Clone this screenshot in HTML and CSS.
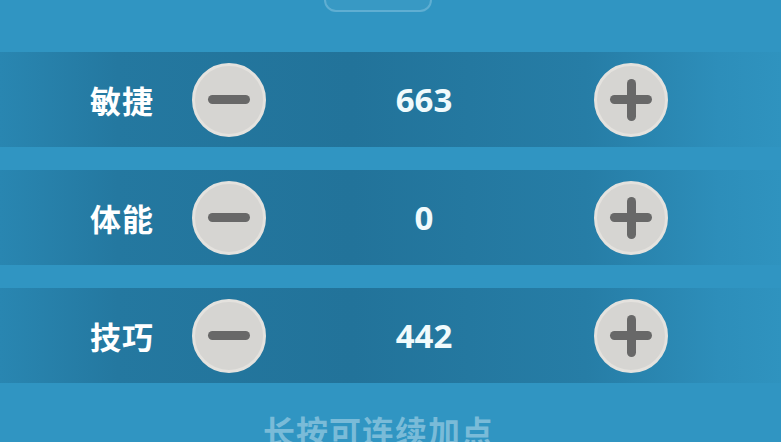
FILE: index.html
```html
<!DOCTYPE html>
<html lang="zh">
  <head>
    <meta charset="UTF-8" />
    <meta name="viewport" content="width=device-width, initial-scale=1.0" />
    <title>加点</title>
    <link rel="stylesheet" href="styles.css">
  </head>
  <body>
    <div class="panel">
      <div class="top-tab"></div>

      <div class="stat-list">
        <div class="stat-row">
          <span class="stat-name">敏捷</span>
          <button type="button" class="round-btn minus"></button>
          <span class="stat-value">663</span>
          <button type="button" class="round-btn plus"></button>
        </div>
        <div class="stat-row">
          <span class="stat-name">体能</span>
          <button type="button" class="round-btn minus"></button>
          <span class="stat-value">0</span>
          <button type="button" class="round-btn plus"></button>
        </div>
        <div class="stat-row">
          <span class="stat-name">技巧</span>
          <button type="button" class="round-btn minus"></button>
          <span class="stat-value">442</span>
          <button type="button" class="round-btn plus"></button>
        </div>
      </div>

      <div class="hint">长按可连续加点</div>
    </div>
  </body>
</html>
```

FILE: styles.css
```css
body {
  margin: 0;
  font-family: "Noto Sans", "Noto Sans CJK SC", sans-serif;
  background-color: rgb(48, 149, 194);
  color: white;
  overflow: hidden;
}

.panel {
  width: 781px;
  height: 442px;
  position: relative;
  display: flex;
  flex-direction: column;
}

/* tab peeking in from the top edge */
.top-tab {
  position: absolute;
  left: 324px;
  top: -30px;
  width: 108px;
  height: 42px;
  border-radius: 12px;
  background-color: rgba(255, 255, 255, 0.04);
  border: 2px solid rgba(170, 215, 235, 0.35);
  box-sizing: border-box;
}

.stat-list {
  display: flex;
  flex-direction: column;
  gap: 23px;
  padding-top: 52px;
}

.stat-row {
  height: 95px;
  display: grid;
  grid-template-columns: 102px 74px 316px 12px 74px;
  align-items: center;
  padding-left: 90px;
  background: linear-gradient(
    to right,
    rgb(41, 134, 177) 0%,
    rgb(36, 120, 160) 15%,
    rgb(34, 115, 154) 45%,
    rgb(38, 125, 166) 75%,
    rgb(45, 142, 186) 92%,
    rgb(47, 147, 191) 100%
  );
}

.stat-name {
  font-size: 31px;
  font-weight: bold;
  letter-spacing: 1px;
}

.stat-value {
  text-align: center;
  font-size: 33px;
  font-weight: bold;
  color: rgb(240, 250, 252);
}

.round-btn {
  width: 74px;
  height: 74px;
  border-radius: 50%;
  border: 3px solid rgb(228, 226, 222);
  background-color: rgb(214, 213, 210);
  padding: 0;
  position: relative;
  cursor: pointer;
}

.round-btn.plus {
  grid-column: 5;
}

.round-btn::before,
.plus::after {
  content: "";
  position: absolute;
  left: 50%;
  top: 50%;
  width: 42px;
  height: 9px;
  margin-left: -21px;
  margin-top: -4.5px;
  border-radius: 5px;
  background-color: rgb(104, 104, 104);
}

.plus::after {
  width: 9px;
  height: 42px;
  margin-left: -4.5px;
  margin-top: -21px;
}

.hint {
  margin-top: 24px;
  text-align: center;
  padding-right: 24px;
  font-size: 32px;
  font-weight: bold;
  color: rgb(122, 187, 216);
  letter-spacing: 1px;
}
```
